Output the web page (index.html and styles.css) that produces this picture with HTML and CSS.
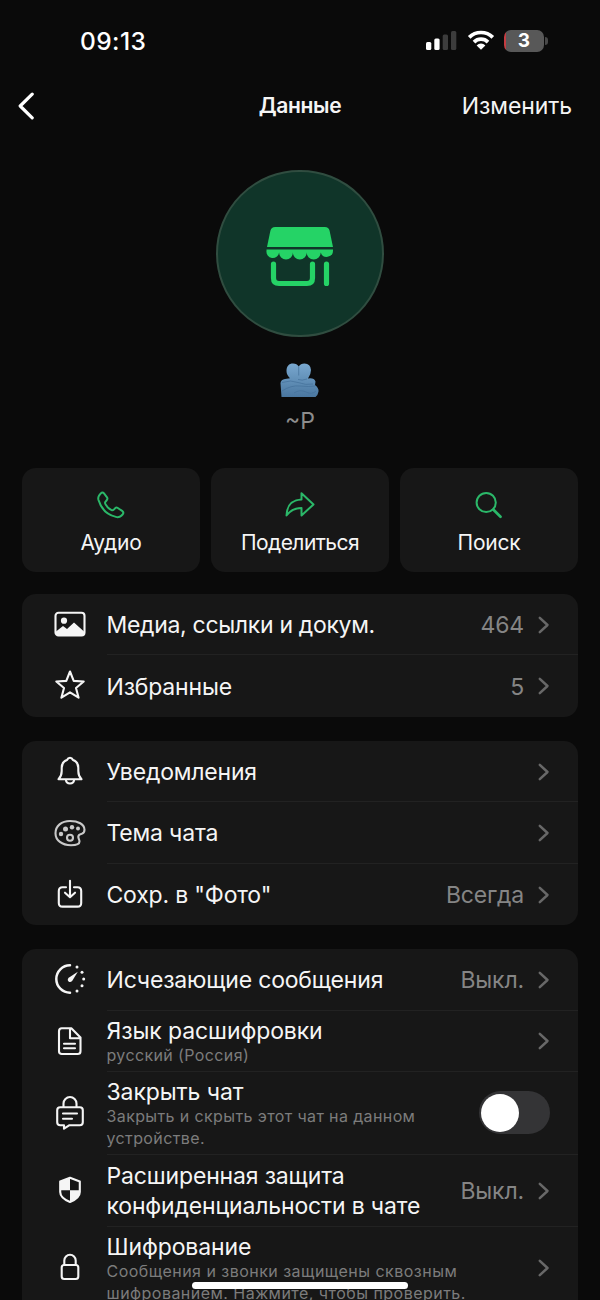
FILE: index.html
```html
<!DOCTYPE html>
<html lang="ru">
<head>
<meta charset="utf-8">
<title>Данные</title>
<link rel="stylesheet" href="styles.css">
</head>
<body>
<svg class="defs" width="0" height="0"><symbol id="chev" viewBox="0 0 12 20"><path d="M1.8 2.8 9.5 10l-7.7 7.2" fill="none" stroke="currentColor" stroke-width="2.5" stroke-linecap="round" stroke-linejoin="round"/></symbol></svg>
<main class="screen">
  <header class="status">
    <span class="time">09:13</span>
    <div class="status-icons">
      <svg class="signal" width="31" height="20" viewBox="0 0 31 20"><rect x="0" y="12" width="5.3" height="8" rx="1.5" fill="#fff"/><rect x="8.3" y="8.5" width="5.3" height="11.5" rx="1.5" fill="#fff"/><rect x="16.7" y="4.5" width="5.3" height="15.5" rx="1.5" fill="#3c3c3c"/><rect x="25" y="1" width="5.3" height="19" rx="1.5" fill="#3c3c3c"/></svg>
      <svg class="wifi" width="28" height="20" viewBox="0 0 28 20"><path d="M2.2 7.4a16.6 16.6 0 0 1 23.6 0M7 12.1a9.9 9.9 0 0 1 14 0" fill="none" stroke="#fff" stroke-width="3.7"/><path d="M9.6 15.4a6.3 6.3 0 0 1 8.8 0L14 19.8z" fill="#fff"/></svg>
      <div class="battery"><span class="level">3</span><i class="battery-tip"></i></div>
    </div>
  </header>
  <nav class="nav">
    <svg class="back" width="18" height="28" viewBox="0 0 18 28"><path d="M15.200 2.2 3.200 14l12 11.800" fill="none" stroke="#fff" stroke-width="3.2" stroke-linecap="round" stroke-linejoin="round"/></svg>
    <h1 class="title">Данные</h1>
    <span class="edit">Изменить</span>
  </nav>
  <section class="profile">
    <div class="avatar">
      <svg width="68" height="60" viewBox="0 0 68 60" fill="#25d366"><path d="M1 20 4.4 3.8Q5.200 0 9.200 0h49.600q4 0 4.800 3.800L67 20z"/><path d="M.5 22.500h66.500v1.200a6.300 6.300 0 0 1-12.300 1.800 6.700 6.700 0 0 1-14 0 6.700 6.700 0 0 1-13.800 0 6.700 6.700 0 0 1-13.800 0A6.300 6.300 0 0 1 .500 23.700z"/><path d="M7.500 37v14q0 5.500 5.500 5.500h28q5.500 0 5.500-5.500V37M60.500 37v19.500" fill="none" stroke="#25d366" stroke-width="5.200" stroke-linecap="round"/></svg>
    </div>
    <svg class="emoji" width="40" height="35" viewBox="0 0 40 35"><defs><linearGradient id="sky" x2="0" y2="1"><stop offset="0" stop-color="#79a8cf"/><stop offset="1" stop-color="#4a77a0"/></linearGradient></defs><path d="M6.500 8C6.500 3 9 .500 13 .500q4 0 5.700 3Q20.500.500 24.500 .500q6 0 6.500 6.500 0 4.500-3 8.500 6-1 7.500 3l-.500 3.500q4 3 3.500 6.500-.500 3.500-3 5.500H1.500L.500 20Q1 16.500 5 16l5-.700Q6.500 12 6.500 8z" fill="url(#sky)"/><path d="M18.700 3.500v9M2 19.500q9-3 16 0 8 3 15 1.500M2 28q9-6 18-5t15 0M14 30q6-4 12-1t10-1M27 16q-5 2-9 .500" fill="none" stroke="#44709a" stroke-width=".7"/></svg>
    <p class="nick">~P</p>
  </section>
  <section class="actions">
    <div class="action"><svg width="28" height="28" viewBox="0 0 28 28"><path d="M2 4.700 3.800 2.400Q5.500.600 7 2.400L10 6.300q.900 1.400-.100 2.700L8.400 10.800q-.700 1 0 2.300 2.600 4.600 6.200 6 1.200.500 2.200-.500l1.500-1.500q1.100-1 2.500-.100l4.700 3.200q1.500 1.300.300 3l-1.500 1.500q-2 2-5.400 1.200Q5.800 22.900 1.500 9 .800 6.500 2 4.700z"/></svg><span>Аудио</span></div>
    <div class="action"><svg width="30" height="28" viewBox="0 0 30 28"><path d="M16.500 2.300v6.200C7.500 9 2 13 1.500 24.500q5.500-7.500 15-7.500v7.500L28.500 13.400z"/></svg><span class="share">Поделиться</span></div>
    <div class="action"><svg width="28" height="28" viewBox="0 0 28 28"><circle cx="11.200" cy="11.500" r="9.600"/><path d="m18.500 18.800 7 7" stroke-width="2.700"/></svg><span>Поиск</span></div>
  </section>

  <section class="card">
    <div class="row"><svg class="icon" viewBox="0 0 32 32"><rect x="1.500" y="4.800" width="29" height="22.600" rx="3"/><circle cx="10" cy="12.700" r="3.100" class="solid"/><path class="solid" d="M2 23.500 9 18l4 3 7-6.500 10 9V27H2z"/></svg><div class="content"><span class="label media">Медиа, ссылки и докум.</span><span class="value">464</span><svg class="chev"><use href="#chev"/></svg></div></div>
    <div class="row"><svg class="icon" viewBox="0 0 32 32"><path d="m16 2.500 3.700 9.400 10 .6-7.700 6.500 2.600 9.700L16 23.300l-8.600 5.400L10 19l-7.700-6.500 10-.6z"/></svg><div class="content"><span class="label">Избранные</span><span class="value">5</span><svg class="chev"><use href="#chev"/></svg></div></div>
  </section>

  <section class="card">
    <div class="row"><svg class="icon" viewBox="0 0 32 32"><path d="M4.500 24.300Q7.700 21 7.700 16v-3.200Q7.700 6.800 13 5q1-2.200 3-2.200T19 5q5.300 1.800 5.300 7.800V16q0 5 3.200 8.300zM11.800 24.500q.400 4 4.200 4t4.200-4"/></svg><div class="content"><span class="label">Уведомления</span><svg class="chev"><use href="#chev"/></svg></div></div>
    <div class="row"><svg class="icon palette" viewBox="0 0 32 32"><path d="M16 4C7.500 4 1.500 9 1.500 16.200S8 28.200 17 28.200c5.500 0 8.500-1.500 8.500-3.700 0-2-1.200-2.800-1.200-4.700 0-2 1.500-2.500 3.500-3 2-.600 2.700-1.700 2.700-4C30.500 7 24 4 16 4z"/><circle cx="16" cy="20.800" r="3"/><g class="dots"><circle cx="7" cy="17" r="2.200"/><circle cx="11.500" cy="12" r="2.500"/><circle cx="18" cy="10.200" r="2.200"/><circle cx="24" cy="11.500" r="2"/></g></svg><div class="content"><span class="label">Тема чата</span><svg class="chev"><use href="#chev"/></svg></div></div>
    <div class="row"><svg class="icon" viewBox="0 0 32 32"><path d="M12 9.200H8.500q-3.700 0-3.700 3.700v12q0 3.700 3.700 3.700h15q3.700 0 3.700-3.700v-12q0-3.700-3.700-3.700H20M16 2.800v15.800M11 14.700l5 4.500 5-4.500"/></svg><div class="content"><span class="label">Сохр. в "Фото"</span><span class="value">Всегда</span><svg class="chev"><use href="#chev"/></svg></div></div>
  </section>

  <section class="card last">
    <div class="row"><svg class="icon" viewBox="0 0 32 32"><path d="M16 2.300a13.700 13.700 0 0 0 0 27.400" stroke-width="2.500"/><path class="solid" d="M23.800 8.800 18.300 17.700q-2 2.200-3.700.700t.1-3.700z"/><g class="dots"><circle cx="23" cy="4" r="1.500"/><circle cx="28" cy="9.200" r="1.500"/><circle cx="29.700" cy="16" r="1.500"/><circle cx="28" cy="22.800" r="1.500"/><circle cx="23" cy="28" r="1.500"/></g></svg><div class="content"><span class="label">Исчезающие сообщения</span><span class="value">Выкл.</span><svg class="chev"><use href="#chev"/></svg></div></div>
    <div class="row"><svg class="icon" viewBox="0 0 32 32"><path d="M7.800 3.300h9.500L26.500 12.500v13.700q0 2.800-2.800 2.800H7.800q-2.800 0-2.800-2.800v-20q0-2.900 2.800-2.900zM16 3.500v9.800h10M10 18.700h11M10 23.200h11"/></svg><div class="content"><div class="texts"><span class="label language">Язык расшифровки</span><span class="sub">русский (Россия)</span></div><svg class="chev"><use href="#chev"/></svg></div></div>
    <div class="row lock-row"><svg class="icon tall" viewBox="0 0 32 36"><path d="M9.500 12V8.500a6.500 6.500 0 0 1 13 0V12M6.200 12.200h19.600q3 0 3 3v12q0 3-3 3H15.500L10 33.700v-3.500H6.200q-3 0-3-3v-12q0-3 3-3zM9 18.500h14M9 23.800h9"/></svg><div class="content"><div class="texts"><span class="label">Закрыть чат</span><span class="sub">Закрыть и скрыть этот чат на данном<br>устройстве.</span></div><div class="toggle"><i class="knob"></i></div></div></div>
    <div class="row privacy-row"><svg class="icon" viewBox="0 0 32 32"><path d="m16 3.800 9.800 3.600V18q0 6-9.800 10Q6.200 24 6.200 18V7.400z"/><path class="fill" d="M16 4v12.200H6V7.700zM16 16.200h10V18q-.200 6-10 10z"/></svg><div class="content"><span class="label double">Расширенная защита<br>конфиденциальности в чате</span><span class="value">Выкл.</span><svg class="chev"><use href="#chev"/></svg></div></div>
    <div class="row crypto-row"><svg class="icon" viewBox="0 0 32 32"><path d="M10.300 14V9.500a5.700 5.700 0 0 1 11.400 0V14"/><rect x="7.700" y="14" width="16.600" height="14" rx="2.500"/></svg><div class="content"><div class="texts"><span class="label">Шифрование</span><span class="sub">Сообщения и звонки защищены сквозным<br>шифрованием. Нажмите, чтобы проверить.</span></div><svg class="chev"><use href="#chev"/></svg></div></div>
  </section>
  <div class="home-bar"></div>
</main>
</body>
</html>
```
FILE: styles.css
```css
* { box-sizing: border-box; }
body { margin: 0; background: #0a0a0a; }
.defs { position: absolute; }
.screen {
  position: relative;
  width: 600px;
  height: 1300px;
  overflow: hidden;
  display: flex;
  flex-direction: column;
  background: #0a0a0a;
  color: #f5f5f5;
  font-family: Inter, "Liberation Sans", sans-serif;
  font-size: 23px;
}
.status {
  flex: none;
  height: 80px;
  padding: 1px 56px 0 80px;
  display: flex;
  align-items: center;
  justify-content: space-between;
}
.time { font-size: 24.500px; font-weight: 550; color: #fff; letter-spacing: 0.400px; }
.status-icons { display: flex; align-items: center; gap: 9.500px; }
.status-icons svg { display: block; margin-top: -2px; }
.battery {
  position: relative;
  width: 40px;
  height: 22px;
  border-radius: 7px;
  background: linear-gradient(90deg, #c43b40 2px, #585858 2px);
  display: flex;
  align-items: center;
  justify-content: center;
}
.level { font-size: 19px; line-height: 22px; font-weight: 700; color: #fff; }
.battery-tip {
  position: absolute;
  right: -3.500px;
  top: 7px;
  width: 2.500px;
  height: 8px;
  border-radius: 0 3px 3px 0;
  background: #484848;
}
.nav {
  flex: none;
  height: 51px;
  padding: 0 28px 0 17px;
  display: grid;
  grid-template-columns: 1fr auto 1fr;
  align-items: center;
}
.title { margin: 0 0 0 11px; font-size: 21px; font-weight: 600; letter-spacing: -0.300px; }
.edit { justify-self: end; font-size: 23px; letter-spacing: -0.100px; }
.profile {
  flex: none;
  height: 337px;
  padding-top: 38.500px;
  display: flex;
  flex-direction: column;
  align-items: center;
}
.avatar {
  flex: none;
  width: 167.500px;
  height: 167.500px;
  border: 2px solid #304d40;
  border-radius: 50%;
  background: #103529;
  display: flex;
  align-items: center;
  justify-content: center;
}
.avatar svg { margin-top: 7px; }
.emoji { margin: 25.500px 0 0 -1px; }
.nick { margin: 7.500px 0 0; line-height: 32px; color: #8d8d8d; }
.actions {
  flex: none;
  margin: 0 22px;
  height: 103.500px;
  display: grid;
  grid-template-columns: repeat(3, 1fr);
  gap: 11px;
}
.action {
  background: #171717;
  border-radius: 14px;
  padding-top: 23px;
  display: flex;
  flex-direction: column;
  align-items: center;
}
.action svg { fill: none; stroke: #2bb869; stroke-width: 2; stroke-linejoin: round; stroke-linecap: round; }
.action span { margin-top: 10px; font-size: 21px; line-height: 28px; letter-spacing: -0.200px; }
.action .share { letter-spacing: -0.550px; }
.card {
  flex: none;
  margin: 22.500px 22px 2px;
  background: #171717;
  border-radius: 14px;
}
.row { height: 61.250px; display: flex; align-items: center; padding-left: 31.500px; }
.icon {
  flex: none;
  width: 32px;
  height: 32px;
  margin: -1px 21px 0 0;
  fill: none;
  stroke: #f5f5f5;
  stroke-width: 2.100px;
  stroke-linecap: round;
  stroke-linejoin: round;
}
.icon.tall { height: 36px; }
.solid, .fill { fill: #f5f5f5; stroke: none; }
.dots { fill: #f5f5f5; stroke: none; }
.palette { stroke: #c9c9c9; margin-top: 0; }
.palette .dots { fill: #c9c9c9; }
.content {
  flex: 1;
  height: 100%;
  display: flex;
  align-items: center;
  padding: 1px 28px 0 0;
  border-bottom: 1px solid #222;
}
.row:last-child .content { border-bottom: 0; }
.label { padding-top: 1px; line-height: 30.500px; letter-spacing: -0.190px; white-space: nowrap; }
.media { letter-spacing: -0.310px; }
.label.language { letter-spacing: -0.050px; }
.label.double { letter-spacing: -0.160px; }
.value { margin-left: auto; padding-top: 1px; color: #858585; letter-spacing: -0.150px; }
.chev { flex: none; width: 12px; height: 20px; margin-left: auto; color: #686868; }
.value + .chev { margin-left: 14px; }
.texts { display: flex; flex-direction: column; padding-top: 1px; }
.texts .label { line-height: 26px; letter-spacing: -0.100px; }
.sub { font-size: 16px; line-height: 22px; color: #7c7c7c; letter-spacing: 0.380px; white-space: nowrap; }
.lock-row { height: 83px; }
.privacy-row { height: 72px; }
.crypto-row { height: 81px; }
.crypto-row .sub { letter-spacing: 0.470px; }
.last { border-radius: 14px 14px 0 0; }
.toggle {
  width: 71px;
  height: 43px;
  margin: -1px 0 0 auto;
  padding: 2.500px 2px;
  border-radius: 22px;
  background: #343436;
}
.knob { display: block; width: 38px; height: 38px; border-radius: 50%; background: #fff; }
.home-bar {
  position: absolute;
  left: 192px;
  top: 1282px;
  width: 216px;
  height: 7px;
  border-radius: 4px;
  background: #fff;
}
```
